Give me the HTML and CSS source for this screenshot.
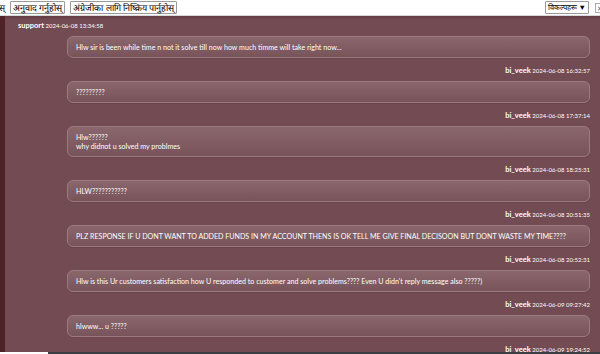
FILE: index.html
```html
<!DOCTYPE html>
<html lang="en">
<head>
  <meta charset="UTF-8">
  <title>Ticket conversation</title>
  <link rel="stylesheet" href="styles.css">
</head>
<body>
  <!-- translate bar -->
  <div class="translate-bar">
    <span class="tb-cut">हेस्</span>
    <button class="tb-btn">अनुवाद गर्नुहोस्</button>
    <button class="tb-btn">अंग्रेजीका लागि निष्क्रिय पार्नुहोस्</button>
    <span class="tb-spacer"></span>
    <button class="tb-btn tb-opts">विकल्पहरू ▼</button>
    <span class="tb-close">✕</span>
  </div>

  <div class="thread">
    <div class="msg">
      <div class="meta left"><b>support</b> 2024-06-08 13:34:58</div>
      <div class="bubble">Hlw sir is been while time n not it solve till now how much timme will take right now...</div>
    </div>
    <div class="msg">
      <div class="meta"><b>bi_veek</b> 2024-06-08 16:32:57</div>
      <div class="bubble">?????????</div>
    </div>
    <div class="msg">
      <div class="meta"><b>bi_veek</b> 2024-06-08 17:37:14</div>
      <div class="bubble">Hlw??????<br>why didnot u solved my problmes</div>
    </div>
    <div class="msg">
      <div class="meta"><b>bi_veek</b> 2024-06-08 18:25:31</div>
      <div class="bubble">HLW???????????</div>
    </div>
    <div class="msg">
      <div class="meta"><b>bi_veek</b> 2024-06-08 20:51:35</div>
      <div class="bubble">PLZ RESPONSE IF U DONT WANT TO ADDED FUNDS IN MY ACCOUNT THENS IS OK TELL ME GIVE FINAL DECISOON BUT DONT WASTE MY TIME????</div>
    </div>
    <div class="msg">
      <div class="meta"><b>bi_veek</b> 2024-06-08 20:52:31</div>
      <div class="bubble">Hlw is this Ur customers satisfaction how U responded to customer and solve problems???? Even U didn't reply message also ?????)</div>
    </div>
    <div class="msg">
      <div class="meta"><b>bi_veek</b> 2024-06-09 09:27:42</div>
      <div class="bubble">hlwww... u ?????</div>
    </div>
    <div class="msg">
      <div class="meta"><b>bi_veek</b> 2024-06-09 19:24:52</div>
    </div>
  </div>

  <div class="statusbar"><span class="sb-white"></span></div>
</body>
</html>
```

FILE: styles.css
```css
html, body {
  margin: 0;
  padding: 0;
  height: 100%;
  overflow: hidden;
}
body {
  font-family: Lato, "Open Sans", sans-serif;
  background: #734b52;
  display: flex;
  flex-direction: column;
}
/* translate bar */
.translate-bar {
  height: 16px;
  background: #fff;
  border-bottom: 1px solid #d8d8d8;
  display: flex;
  align-items: center;
  gap: 5px;
  font-size: 9px;
  color: #000;
  box-sizing: border-box;
  flex-shrink: 0;
}
.tb-cut {
  margin-left: -6px;
}
.tb-btn {
  font: inherit;
  font-size: 9px;
  line-height: 11px;
  padding: 0 2px;
  margin: 0;
  background: #fff;
  border: 1px solid #999;
  border-radius: 1px;
  color: #000;
}
.tb-spacer {
  flex: 1;
}
.tb-opts {
  font-size: 7.5px;
  margin-right: 1px;
}
.tb-close {
  font-size: 7px;
  color: #666;
  border: 1px solid #aaa;
  width: 7px;
  height: 8px;
  line-height: 8px;
  text-align: center;
  margin-right: -4px;
}
/* conversation */
.thread {
  flex: 1;
  border-left: 5px solid #4f2229;
  padding: 0 10px 0 13px;
  background: linear-gradient(#643b42, #734b52 4px);
  overflow: hidden;
}
.meta {
  text-align: right;
  color: #fff;
  font-size: 6px;
  line-height: 9px;
  margin: 8px 0 6px;
}
.meta b {
  font-size: 7.5px;
  font-weight: 700;
}
.meta.left {
  text-align: left;
  margin-top: 5px;
}
.bubble {
  margin-left: 49px;
  padding: 6px 8px 5px;
  font-size: 7.1px;
  line-height: 9px;
  color: #fff;
  border: 1px solid #9c7b80;
  border-radius: 6px;
  background: linear-gradient(#8a676c, #78545a);
  box-shadow: 0 1px 0 rgba(0,0,0,0.08);
}
.statusbar {
  height: 2px;
  background: #3b3f44;
  flex-shrink: 0;
}
.sb-white {
  display: block;
  width: 48px;
  height: 2px;
  background: #fff;
}
```
